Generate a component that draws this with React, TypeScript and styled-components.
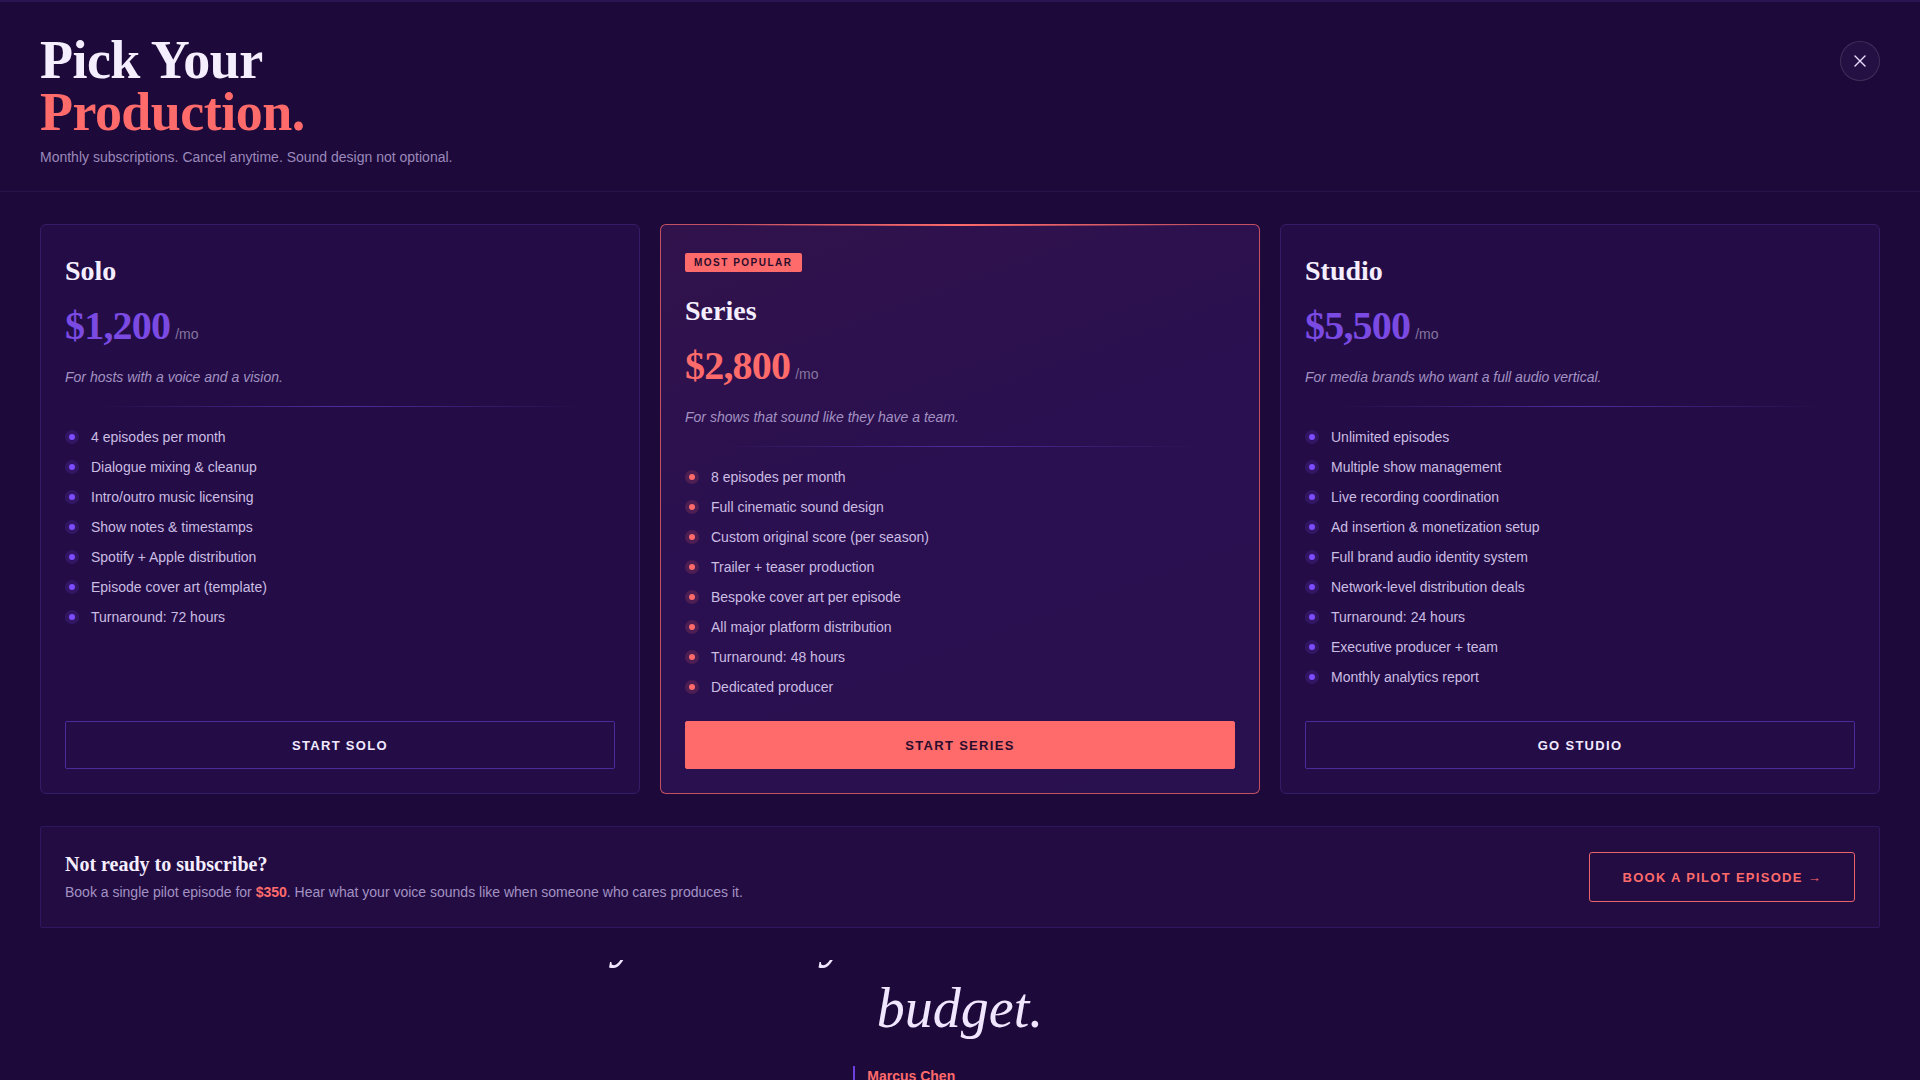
import React from "react";
import styled, { createGlobalStyle, css } from "styled-components";

const serif = `"Liberation Serif", "Times New Roman", serif`;
const sans = `"Liberation Sans", Arial, sans-serif`;

const coral = "#ff6b6b";
const violet = "#7b4ae2";

type Plan = {
  name: string;
  price: string;
  blurb: string;
  features: string[];
  cta: string;
  featured?: boolean;
};

const plans: Plan[] = [
  {
    name: "Solo",
    price: "$1,200",
    blurb: "For hosts with a voice and a vision.",
    features: [
      "4 episodes per month",
      "Dialogue mixing & cleanup",
      "Intro/outro music licensing",
      "Show notes & timestamps",
      "Spotify + Apple distribution",
      "Episode cover art (template)",
      "Turnaround: 72 hours",
    ],
    cta: "Start Solo",
  },
  {
    name: "Series",
    price: "$2,800",
    blurb: "For shows that sound like they have a team.",
    features: [
      "8 episodes per month",
      "Full cinematic sound design",
      "Custom original score (per season)",
      "Trailer + teaser production",
      "Bespoke cover art per episode",
      "All major platform distribution",
      "Turnaround: 48 hours",
      "Dedicated producer",
    ],
    cta: "Start Series",
    featured: true,
  },
  {
    name: "Studio",
    price: "$5,500",
    blurb: "For media brands who want a full audio vertical.",
    features: [
      "Unlimited episodes",
      "Multiple show management",
      "Live recording coordination",
      "Ad insertion & monetization setup",
      "Full brand audio identity system",
      "Network-level distribution deals",
      "Turnaround: 24 hours",
      "Executive producer + team",
      "Monthly analytics report",
    ],
    cta: "Go Studio",
  },
];

const GlobalStyle = createGlobalStyle`
  *, *::before, *::after { box-sizing: border-box; }
  html, body { margin: 0; padding: 0; }
  body {
    background: #1e0a3a;
    color: #f1e9ff;
    font-family: ${sans};
    overflow: hidden;
  }
`;

const CloseIcon = () => (
  <svg width="12" height="12" viewBox="0 0 12 12" fill="none">
    <path d="M1 1L11 11M11 1L1 11" stroke="#eadfff" strokeWidth="1.4" strokeLinecap="round" />
  </svg>
);

const PlanCard = ({ plan }: { plan: Plan }) => (
  <Card $featured={plan.featured}>
    {plan.featured && <Badge>Most Popular</Badge>}
    <PlanName>{plan.name}</PlanName>
    <PriceRow>
      <Amount $featured={plan.featured}>{plan.price}</Amount>
      <Per>/mo</Per>
    </PriceRow>
    <Blurb>{plan.blurb}</Blurb>
    <Divider />
    <Features>
      {plan.features.map((f) => (
        <Feature key={f}>
          <Dot $featured={plan.featured} />
          {f}
        </Feature>
      ))}
    </Features>
    <CtaButton $featured={plan.featured}>{plan.cta}</CtaButton>
  </Card>
);

const App = () => {
  return (
    <>
      <GlobalStyle />
      <Page>
        <QuoteSection>
          <Quote>
            My listeners keep asking
            <br />
            why he really seems like it has a real
            <br />
            budget.
          </Quote>
          <Attribution>
            <Bar />
            <Cite>
              <Name>Marcus Chen</Name>
              <Role>Host &amp; Producer, Night Shift Radio</Role>
            </Cite>
          </Attribution>
        </QuoteSection>
      </Page>

      <Overlay>
        <Header>
          <div>
            <Title>
              <TitleLine>Pick Your</TitleLine>
              <TitleLine $accent>Production.</TitleLine>
            </Title>
            <Subtitle>Monthly subscriptions. Cancel anytime. Sound design not optional.</Subtitle>
          </div>
          <CloseButton aria-label="Close">
            <CloseIcon />
          </CloseButton>
        </Header>

        <Body>
          <Cards>
            {plans.map((p) => (
              <PlanCard key={p.name} plan={p} />
            ))}
          </Cards>

          <Pilot>
            <div>
              <PilotTitle>Not ready to subscribe?</PilotTitle>
              <PilotText>
                Book a single pilot episode for <strong>$350</strong>. Hear what your voice sounds
                like when someone who cares produces it.
              </PilotText>
            </div>
            <PilotButton>Book a pilot episode →</PilotButton>
          </Pilot>
        </Body>
      </Overlay>
    </>
  );
};

export default App;

/* backdrop page */

const Page = styled.main`
  min-height: 100vh;
  background: #1e0a3a;
`;

const QuoteSection = styled.section`
  padding: 831px 40px 80px;
  display: flex;
  flex-direction: column;
  align-items: center;
`;

const Quote = styled.blockquote`
  margin: 0;
  font-family: ${serif};
  font-style: italic;
  font-weight: 400;
  font-size: 56px;
  line-height: 71px;
  color: #f1e6ff;
  text-align: center;
`;

const Attribution = styled.div`
  display: flex;
  align-items: stretch;
  gap: 12px;
  margin-top: 22px;
`;

const Bar = styled.span`
  width: 2px;
  background: #6d3fe0;
`;

const Cite = styled.div`
  display: flex;
  flex-direction: column;
`;

const Name = styled.span`
  font-size: 14px;
  line-height: 20px;
  font-weight: 700;
  color: ${coral};
`;

const Role = styled.span`
  font-size: 13px;
  line-height: 20px;
  color: #9a89ba;
`;

/* modal */

const Overlay = styled.div`
  position: fixed;
  top: 0;
  left: 0;
  right: 0;
  z-index: 10;
  background: #1e0a3a;
  border-top: 2px solid #2b1552;
  padding-bottom: 32px;
`;

const Header = styled.header`
  display: flex;
  justify-content: space-between;
  align-items: flex-start;
  padding: 31px 40px 24px;
  border-bottom: 1px solid #29144a;
`;

const Title = styled.h1`
  margin: 0;
  display: flex;
  flex-direction: column;
  gap: 0;
  font-family: ${serif};
  font-weight: 700;
  font-size: 54px;
  letter-spacing: -0.01em;
`;

const TitleLine = styled.span<{ $accent?: boolean }>`
  display: block;
  height: 52px;
  line-height: 54px;
  color: ${(p) => (p.$accent ? coral : "#f4eeff")};
`;

const Subtitle = styled.p`
  margin: 10px 0 0;
  font-size: 14px;
  line-height: 20px;
  color: #9a89ba;
`;

const CloseButton = styled.button`
  width: 40px;
  height: 40px;
  margin-top: 8px;
  border-radius: 50%;
  border: 1px solid rgba(255, 255, 255, 0.12);
  background: #251043;
  display: flex;
  align-items: center;
  justify-content: center;
  padding: 0;
  cursor: pointer;
`;

const Body = styled.div`
  display: flex;
  flex-direction: column;
  gap: 32px;
  padding: 32px 40px 0;
`;

const Cards = styled.div`
  display: grid;
  grid-template-columns: repeat(3, 1fr);
  gap: 20px;
`;

const Card = styled.article<{ $featured?: boolean }>`
  position: relative;
  display: flex;
  flex-direction: column;
  padding: 28px 24px 24px;
  background: #240d46;
  border: 1px solid #341c66;
  border-radius: 6px;

  ${(p) =>
    p.$featured &&
    css`
      background: linear-gradient(160deg, #31124b 0%, #2a1050 45%, #29104e 100%);
      border-color: rgba(255, 107, 107, 0.72);

      &::before {
        content: "";
        position: absolute;
        top: -1px;
        left: 10%;
        right: 10%;
        height: 2px;
        background: linear-gradient(90deg, transparent, ${coral} 50%, transparent);
      }
    `}
`;

const Badge = styled.span`
  align-self: flex-start;
  margin-bottom: 21px;
  padding: 4px 9px;
  border-radius: 2px;
  background: ${coral};
  color: #2b0c2c;
  font-size: 10px;
  line-height: 11px;
  font-weight: 700;
  letter-spacing: 1.5px;
  text-transform: uppercase;
`;

const PlanName = styled.h2`
  margin: 1px 0 16px;
  font-family: ${serif};
  font-weight: 700;
  font-size: 28px;
  line-height: 34px;
  color: #f4eeff;
`;

const PriceRow = styled.div`
  display: flex;
  align-items: baseline;
  gap: 5px;
  margin-bottom: 18px;
`;

const Amount = styled.span<{ $featured?: boolean }>`
  font-family: ${serif};
  font-weight: 700;
  font-size: 40px;
  line-height: 44px;
  letter-spacing: -0.02em;
  color: ${(p) => (p.$featured ? coral : violet)};
`;

const Per = styled.span`
  font-size: 14px;
  color: #85759f;
`;

const Blurb = styled.p`
  margin: 0 0 18px;
  font-size: 14px;
  line-height: 22px;
  font-style: italic;
  color: #a392c2;
`;

const Divider = styled.hr`
  margin: 0 0 20px;
  border: none;
  height: 1px;
  background: linear-gradient(90deg, transparent 6%, #4d2d9e 50%, transparent 94%);
`;

const Features = styled.ul`
  list-style: none;
  margin: 0 0 24px;
  padding: 0;
  display: flex;
  flex-direction: column;
  gap: 10px;
`;

const Feature = styled.li`
  display: flex;
  align-items: center;
  gap: 12px;
  font-size: 14px;
  line-height: 20px;
  color: #cbbde3;
`;

const Dot = styled.span<{ $featured?: boolean }>`
  position: relative;
  flex: none;
  width: 14px;
  height: 14px;
  border-radius: 50%;
  background: ${(p) => (p.$featured ? "rgba(255, 107, 107, 0.16)" : "rgba(124, 77, 255, 0.16)")};

  &::after {
    content: "";
    position: absolute;
    top: 4px;
    left: 4px;
    width: 6px;
    height: 6px;
    border-radius: 50%;
    background: ${(p) => (p.$featured ? coral : "#7c4dff")};
  }
`;

const CtaButton = styled.button<{ $featured?: boolean }>`
  margin-top: auto;
  width: 100%;
  height: 48px;
  border-radius: 2px;
  font-family: ${sans};
  font-size: 13px;
  font-weight: 700;
  letter-spacing: 0.1em;
  text-transform: uppercase;
  cursor: pointer;
  border: 1px solid #4a2b98;
  background: transparent;
  color: #f1e9ff;

  ${(p) =>
    p.$featured &&
    css`
      border-color: ${coral};
      background: ${coral};
      color: #2b0c2c;
    `}
`;

const Pilot = styled.section`
  display: flex;
  justify-content: space-between;
  align-items: center;
  padding: 25px 24px;
  background: #220c42;
  border: 1px solid #2f1760;
  border-radius: 2px;
`;

const PilotTitle = styled.h3`
  margin: 0 0 6px;
  font-family: ${serif};
  font-weight: 700;
  font-size: 20px;
  line-height: 24px;
  color: #f4eeff;
`;

const PilotText = styled.p`
  margin: 0;
  font-size: 14px;
  line-height: 20px;
  color: #a392c2;

  strong {
    color: ${coral};
    font-weight: 700;
  }
`;

const PilotButton = styled.button`
  height: 50px;
  padding: 0 32px;
  border: 1px solid #e8646b;
  border-radius: 3px;
  background: transparent;
  color: ${coral};
  font-family: ${sans};
  font-size: 13px;
  font-weight: 700;
  letter-spacing: 0.1em;
  text-transform: uppercase;
  cursor: pointer;
`;
